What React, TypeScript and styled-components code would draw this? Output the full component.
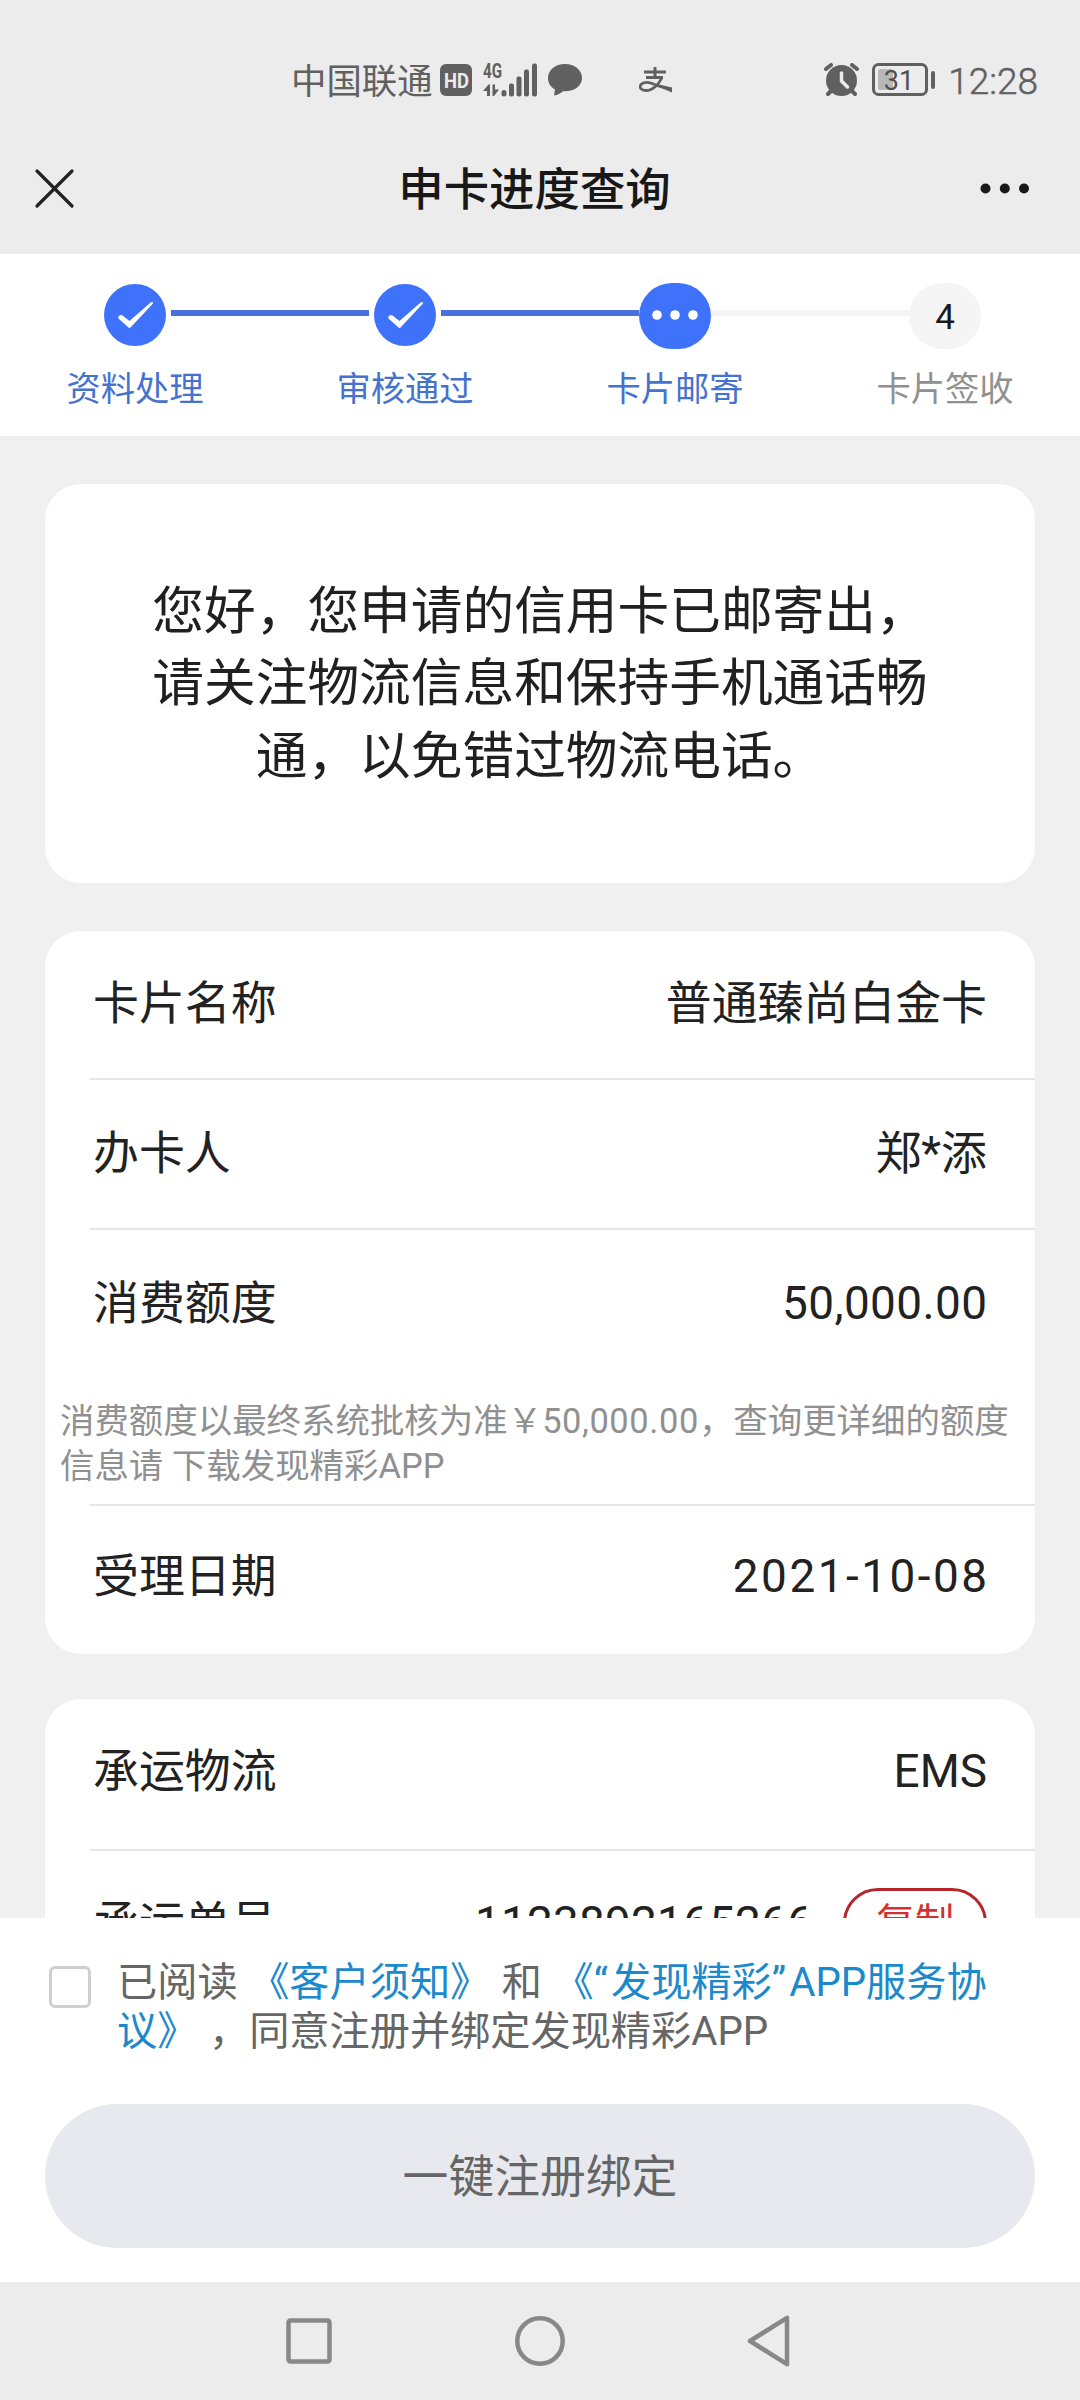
import React from "react";
import styled, { createGlobalStyle } from "styled-components";

const GlobalStyle = createGlobalStyle`
  *, *::before, *::after { box-sizing: border-box; }
  body { margin: 0; background: #f0f0f0; }
`;

const Screen = styled.div`
  width: 1080px;
  height: 2400px;
  display: flex;
  flex-direction: column;
  overflow: hidden;
  background: #f0f0f0;
  color: #222;
  font-family: Roboto, "Noto Sans CJK SC", sans-serif;
`;

const StatusBar = styled.div`
  height: 122px;
  flex: none;
  display: flex;
  align-items: center;
  justify-content: space-between;
  padding: 38px 42px 0 291px;
  background: #ececec;
  color: #606060;
`;

const StatusGroup = styled.div`
  display: flex;
  align-items: center;
`;

const Carrier = styled.span`
  font-size: 35.4px;
  line-height: 40px;
  padding-top: 3px;
  margin-right: 7px;
`;

const Clock = styled.span`
  font-size: 37px;
  line-height: 40px;
  padding-top: 4px;
  font-weight: 300;
  margin-left: 12px;
  -webkit-text-stroke: 0.5px #606060;
`;

const StatusIcon = styled.svg<{ $gap?: number }>`
  display: block;
  margin-right: ${(p) => p.$gap ?? 0}px;
`;

const TitleBar = styled.header`
  height: 132px;
  flex: none;
  display: grid;
  grid-template-columns: 50px 1fr 50px;
  align-items: center;
  padding: 2px 50px 0 30px;
  background: #ececec;
`;

const Title = styled.h1`
  margin: 4px 0 0 9px;
  text-align: center;
  font-size: 45.4px;
  line-height: 60px;
  font-weight: 500;
  color: #181818;
`;

const Steps = styled.section`
  height: 182px;
  flex: none;
  display: grid;
  grid-template-columns: repeat(4, 270px);
  background: #fff;
  padding-top: 29px;
`;

const Step = styled.div`
  display: flex;
  flex-direction: column;
  align-items: center;
`;

const Track = styled.div`
  width: 100%;
  height: 66px;
  display: grid;
  grid-template-columns: 1fr auto 1fr;
`;

const Rail = styled.span<{ $color?: string; $near?: number; $far?: number }>`
  height: 6px;
  margin: 27px ${(p) => p.$far ?? 0}px 0 ${(p) => p.$near ?? 0}px;
  background: ${(p) => p.$color ?? "transparent"};
`;

const Dot = styled.span<{ $tone: "done" | "active" | "idle" }>`
  width: ${(p) => (p.$tone === "done" ? 62 : 72)}px;
  height: ${(p) => (p.$tone === "done" ? 62 : 66)}px;
  margin-top: ${(p) => (p.$tone === "done" ? 0.5 : 0)}px;
  padding-top: ${(p) => (p.$tone === "idle" ? 3 : 0)}px;
  border-radius: 33px;
  display: flex;
  align-items: center;
  justify-content: center;
  background: ${(p) => (p.$tone === "idle" ? "#f5f5f5" : "#3e72fb")};
  color: #1a1a1a;
  font-size: 35px;
`;

const StepLabel = styled.span<{ $muted?: boolean }>`
  margin-top: 18px;
  font-size: 34.3px;
  line-height: 44px;
  color: ${(p) => (p.$muted ? "#909090" : "#4672cf")};
`;

const Content = styled.main`
  height: 1482px;
  flex: none;
  overflow: hidden;
  padding: 48px 45px 0;
  display: flex;
  flex-direction: column;
`;

const Card = styled.section<{ $gap?: number }>`
  flex: none;
  border-radius: 36px;
  background: #fff;
  margin-bottom: ${(p) => p.$gap ?? 0}px;
`;

const Message = styled.p`
  height: 399px;
  margin: 0;
  padding: 92px 107px 0;
  text-align: center;
  font-size: 51.7px;
  line-height: 72.3px;
  color: #202020;
`;

const Row = styled.div<{ $height: number; $line?: boolean; $lift?: number }>`
  height: ${(p) => p.$height}px;
  margin-left: 45px;
  padding: 0 48px ${(p) => p.$lift ?? 2}px 3px;
  display: flex;
  align-items: center;
  justify-content: space-between;
  border-top: ${(p) => (p.$line ? "2px solid #e6e6e6" : "0")};
  font-size: 45.9px;
  line-height: 60px;
`;

const Value = styled.span<{ $track?: number }>`
  display: flex;
  align-items: center;
  gap: 30px;
  letter-spacing: ${(p) => p.$track ?? 0}px;
  margin-right: ${(p) => -(p.$track ?? 0)}px;
`;

const Note = styled.p`
  height: 127px;
  margin: 0;
  padding: 22px 20px 0 15px;
  font-size: 34.45px;
  line-height: 45px;
  color: #909090;
  white-space: nowrap;
`;

const Amount = styled.span`
  letter-spacing: 0.6px;
`;

const TrackingNumber = styled.span`
  letter-spacing: 0.2px;
`;

const CopyButton = styled.button`
  width: 144px;
  height: 70px;
  padding: 0;
  border: 3px solid #b8242b;
  border-radius: 35px;
  background: #fff;
  font: inherit;
  font-size: 39px;
  line-height: 60px;
  color: #d2322f;
`;

const Footer = styled.footer`
  height: 364px;
  flex: none;
  padding: 40px 45px 0;
  background: #fff;
`;

const Agreement = styled.label`
  display: flex;
  align-items: flex-start;
  height: 146px;
  padding-left: 4px;
`;

const Checkbox = styled.span`
  width: 42px;
  height: 42px;
  flex: none;
  margin: 8px 26px 0 0;
  border: 3px solid #cfcfcf;
  border-radius: 6px;
`;

const AgreementText = styled.span`
  padding-top: 1px;
  font-size: 40.2px;
  line-height: 48.5px;
  word-spacing: 1.6px;
  color: #666;
  white-space: nowrap;
`;

const Link = styled.a`
  color: #1b89cb;
`;

const Quote = styled.span`
  letter-spacing: 3px;
`;

const SubmitButton = styled.button`
  display: block;
  width: 100%;
  height: 144px;
  padding: 0 0 6px;
  border: 0;
  border-radius: 72px;
  background: #e8e9ee;
  color: #666;
  font: inherit;
  font-size: 45.8px;
`;

const NavBar = styled.nav`
  height: 118px;
  flex: none;
  display: flex;
  align-items: center;
  justify-content: space-between;
  padding: 0 288px 0 284px;
  background: #ececec;
`;

const Check = () => (
  <svg width="38" height="28" viewBox="0 0 38 28">
    <path d="M2.500 15.500Q4 13 6.500 14.500L13.500 20 34 2Q37 0 37 2.500L15 26Q13.500 28 12 26L3 18Q1.500 17 2.500 15.500Z" fill="#fff" />
  </svg>
);

export default function App() {
  return (
    <Screen>
      <GlobalStyle />
      <StatusBar>
        <StatusGroup>
          <Carrier>中国联通</Carrier>
          <StatusIcon $gap={11} width="32" height="32" viewBox="0 0 32 32">
            <rect width="32" height="32" rx="6" fill="#606060" />
            <text x="16.500" y="23.500" textAnchor="middle" textLength="25" lengthAdjust="spacingAndGlyphs" fontSize="21" fontWeight="700" fill="#ececec">HD</text>
          </StatusIcon>
          <StatusIcon $gap={11} width="54" height="34" viewBox="0 0 54 34" fill="#606060">
            <text x="0" y="15" fontSize="19.500" fontWeight="700" textLength="19" lengthAdjust="spacingAndGlyphs">4G</text>
            <path d="M0 28 5.500 21.500H7V33H4V28Z M9.500 21.500H12V26.500H16L11 33H9.500Z" />
            <rect x="18.500" y="27" width="5" height="6.500" rx="2.500" />
            <rect x="26" y="20.500" width="5" height="13" rx="2" />
            <rect x="33.500" y="13.500" width="5" height="20" rx="2" />
            <rect x="41" y="6.500" width="5" height="27" rx="2" />
            <rect x="49" y="0.500" width="5" height="33" rx="2" />
          </StatusIcon>
          <StatusIcon $gap={57} width="34" height="32" viewBox="0 0 34 32">
            <path d="M17 0C7.500 0 0 6 0 14c0 5 2.500 9 7 11.500L6 31.500c3.500-.5 6.500-2 9-4.200C26 28 34 22 34 14 34 6 26.500 0 17 0Z" fill="#606060" />
          </StatusIcon>
          <StatusIcon width="33" height="26" viewBox="0 0 33 26" fill="none" stroke="#606060">
            <path d="M5 5H27 M16 0V10 M7 10.500H24" strokeWidth="3" />
            <path d="M23 10.500C20 17 14 23.500 7 23.500 2 23.500 0 20.500 2 17.500 5 14 12 15.500 18 18.500L33 23" strokeWidth="2.800" />
            <path d="M18 17 33 20.500V25.500L18 19Z" fill="#606060" stroke="none" />
          </StatusIcon>
        </StatusGroup>
        <StatusGroup>
          <StatusIcon $gap={13} width="35" height="34" viewBox="0 0 35 34" fill="none" stroke="#606060" strokeLinecap="round">
            <circle cx="17.500" cy="17.500" r="15.500" fill="#606060" stroke="none" />
            <path d="M2 6 7 2 M33 6 28 2 M4 31 8 27 M31 31 27 27" strokeWidth="4" />
            <path d="M17.500 10V18L23.500 24" stroke="#ececec" strokeWidth="3.500" />
          </StatusIcon>
          <StatusIcon width="64" height="34" viewBox="0 0 64 34">
            <rect x="1.500" y="1.500" width="53" height="30" rx="5" fill="none" stroke="#606060" strokeWidth="3" />
            <rect x="6" y="6" width="15" height="21" rx="2" fill="#b8b8b8" />
            <rect x="59" y="8" width="4" height="18" rx="2" fill="#606060" />
            <text x="27" y="26.500" textAnchor="middle" fontSize="27" fill="#505050">31</text>
          </StatusIcon>
          <Clock>12:28</Clock>
        </StatusGroup>
      </StatusBar>

      <TitleBar>
        <svg width="50" height="50" viewBox="0 0 50 50">
          <path d="M7 7 42 42 M42 7 7 42" stroke="#222" strokeWidth="3.200" strokeLinecap="round" />
        </svg>
        <Title>申卡进度查询</Title>
        <svg width="50" height="12" viewBox="0 0 50 12" fill="#181818">
          <circle cx="5.500" cy="5.500" r="5" />
          <circle cx="24.800" cy="5.500" r="5" />
          <circle cx="44" cy="5.500" r="5" />
        </svg>
      </TitleBar>

      <Steps>
        <Step>
          <Track>
            <Rail />
            <Dot $tone="done"><Check /></Dot>
            <Rail $color="#4870e0" $near={5} />
          </Track>
          <StepLabel>资料处理</StepLabel>
        </Step>
        <Step>
          <Track>
            <Rail $color="#4870e0" $far={5} />
            <Dot $tone="done"><Check /></Dot>
            <Rail $color="#4870e0" $near={5} />
          </Track>
          <StepLabel>审核通过</StepLabel>
        </Step>
        <Step>
          <Track>
            <Rail $color="#4870e0" />
            <Dot $tone="active">
              <svg width="48" height="12" viewBox="0 0 48 12" fill="#fff">
                <circle cx="6" cy="5" r="4.800" />
                <circle cx="24" cy="5" r="4.800" />
                <circle cx="42" cy="5" r="4.800" />
              </svg>
            </Dot>
            <Rail $color="#f4f4f4" />
          </Track>
          <StepLabel>卡片邮寄</StepLabel>
        </Step>
        <Step>
          <Track>
            <Rail $color="#f4f4f4" />
            <Dot $tone="idle">4</Dot>
            <Rail />
          </Track>
          <StepLabel $muted>卡片签收</StepLabel>
        </Step>
      </Steps>

      <Content>
        <Card $gap={48}>
          <Message>
            您好，您申请的信用卡已邮寄出，<br />请关注物流信息和保持手机通话畅<br />通，以免错过物流电话。
          </Message>
        </Card>
        <Card $gap={45}>
          <Row $height={147} $lift={4}><span>卡片名称</span><Value>普通臻尚白金卡</Value></Row>
          <Row $height={150} $line $lift={3}><span>办卡人</span><Value><span>郑*添</span></Value></Row>
          <Row $height={149} $line><span>消费额度</span><Value $track={0.4}>50,000.00</Value></Row>
          <Note>
            消费额度以最终系统批核为准￥<Amount>50,000.00</Amount>，查询更详细的额度<br />信息请 下载发现精彩APP
          </Note>
          <Row $height={150} $line $lift={8}><span>受理日期</span><Value $track={2.5}>2021-10-08</Value></Row>
        </Card>
        <Card>
          <Row $height={150} $lift={6}><span>承运物流</span><Value>EMS</Value></Row>
          <Row $height={150} $line $lift={4}>
            <span>承运单号</span>
            <Value>
              <TrackingNumber>1123892165266</TrackingNumber>
              <CopyButton>复制</CopyButton>
            </Value>
          </Row>
        </Card>
      </Content>

      <Footer>
        <Agreement>
          <Checkbox />
          <AgreementText>
            已阅读 <Link>《客户须知》</Link> 和 <Link>《<Quote>“</Quote>发现精彩<Quote>”</Quote>APP服务协<br />议》</Link> ，同意注册并绑定发现精彩APP
          </AgreementText>
        </Agreement>
        <SubmitButton>一键注册绑定</SubmitButton>
      </Footer>

      <NavBar>
        <svg width="50" height="52" viewBox="0 0 50 52">
          <rect x="4.500" y="5.500" width="41" height="41" rx="2" fill="none" stroke="#888" strokeWidth="4.500" />
        </svg>
        <svg width="52" height="52" viewBox="0 0 52 52">
          <circle cx="26" cy="26" r="22.700" fill="none" stroke="#888" strokeWidth="4.500" />
        </svg>
        <svg width="46" height="52" viewBox="0 0 46 52">
          <path d="M4 26 41 2.800V49.200Z" fill="none" stroke="#888" strokeWidth="4.500" strokeLinejoin="round" />
        </svg>
      </NavBar>
    </Screen>
  );
}
